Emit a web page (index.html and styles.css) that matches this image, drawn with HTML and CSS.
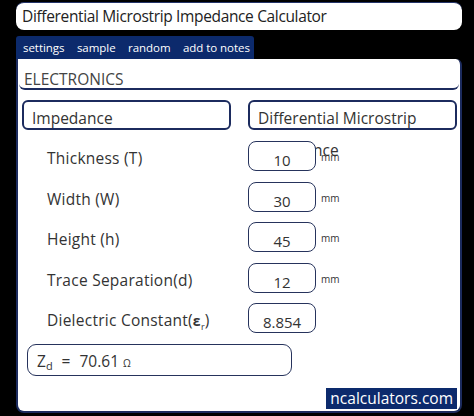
FILE: index.html
```html
<!DOCTYPE html>
<html>
<head>
<meta charset="utf-8">
<link rel="stylesheet" href="styles.css">
</head>
<body>
<div class="wrap">
  <div class="title">Differential Microstrip Impedance Calculator</div>
  <div class="tabs">
    <span class="tab">settings</span>
    <span class="tab">sample</span>
    <span class="tab">random</span>
    <span class="tab">add to notes</span>
  </div>
  <div class="panel">
    <div class="heading">ELECTRONICS</div>
    <div class="selects">
      <div class="sel">Impedance</div>
      <div class="sel">Differential Microstrip Impedance</div>
    </div>
    <div class="form">
      <div class="row"><span class="label">Thickness (T)</span><span class="field">10</span><span class="unit">mm</span></div>
      <div class="row"><span class="label">Width (W)</span><span class="field">30</span><span class="unit">mm</span></div>
      <div class="row"><span class="label">Height (h)</span><span class="field">45</span><span class="unit">mm</span></div>
      <div class="row"><span class="label">Trace Separation(d)</span><span class="field">12</span><span class="unit">mm</span></div>
      <div class="row"><span class="label">Dielectric Constant(<b class="eps">ε</b><sub class="sr">r</sub>)</span><span class="field">8.854</span><span class="unit"></span></div>
    </div>
    <div class="result"><span>Z<sub class="sd">d</sub></span><span class="eq">=</span><span>70.61 <span class="ohm">Ω</span></span></div>
    <div class="foot"><span class="brand">ncalculators.com</span></div>
  </div>
</div>
</body>
</html>
```
FILE: styles.css
```css
html, body { margin: 0; padding: 0; background: #000; }
body { font-family: "Open Sans", "DejaVu Sans", sans-serif; color: #333; }
.wrap { width: 446px; margin-left: 16px; padding-top: 2px; }
.title {
  height: 27px; background: #fff; border-top: 1px solid #24346a;
  border-radius: 8px; padding-left: 6px; font-size: 15.5px; line-height: 27px;
  color: #222; white-space: nowrap; letter-spacing: -0.35px;
}
.tabs {
  display: inline-flex; margin-top: 6px; background: #0c2a6c;
  height: 23px; align-items: center; padding: 0 4px 0 7px;
  border-radius: 3px 3px 0 0;
}
.tab { color: #fff; font-size: 11.5px; margin-right: 12.5px; letter-spacing: -0.05px; }
.tab:last-child { margin-right: 0; }
.panel {
  background: #fff; height: 352px; border: 2px solid #1c2b5e; border-top: 0;
  border-radius: 0 6px 8px 8px; width: 442px;
}
.heading {
  margin: 0 1px; padding: 11px 0 0 5px; height: 18px; font-size: 15.5px;
  line-height: 18px; color: #444; border-bottom: 2px solid #1c2b5e;
  border-radius: 0 0 6px 6px;
}
.selects { display: flex; gap: 17px; margin: 10px 0 0 4px; }
.sel {
  height: 26px; border: 2px solid #1c2b5e; border-radius: 6px;
  padding-left: 8px; font-size: 15.5px; line-height: 32px; color: #333;
  width: 197px;
}
.form { margin-top: 11px; }
.row { display: flex; align-items: flex-start; height: 40.5px; }
.label { width: 201px; padding-left: 29px; padding-top: 6px; font-size: 15.5px; letter-spacing: 0.25px; color: #333; }
.field {
  border: 1.5px solid #26335c; border-radius: 8px;
  background: #fff; text-align: center; font-size: 15px; line-height: 27px;
  padding-top: 5px; box-sizing: border-box; height: 30px; width: 68px; color: #333;
}
.unit { font-size: 10px; margin-left: 5px; padding-top: 9px; color: #333; }
.eps { font-weight: bold; font-size: 14px; }
.sr { font-size: 9px; }
.result {
  display: flex; gap: 9px; margin: 0 0 0 9px; width: 254px; height: 30px;
  border: 1.5px solid #26335c; border-radius: 9px; padding-left: 9px;
  font-size: 15.5px; line-height: 32px; color: #333;
}
.sd { font-size: 11px; vertical-align: -3px; }
.ohm { font-size: 10px; }
.foot { display: flex; justify-content: flex-end; margin-top: 12px; padding-right: 3px; }
.brand {
  background: #0c2a6c; color: #fff; font-size: 15.5px; height: 21px; line-height: 21px;
  padding: 0 4px;
}
```
